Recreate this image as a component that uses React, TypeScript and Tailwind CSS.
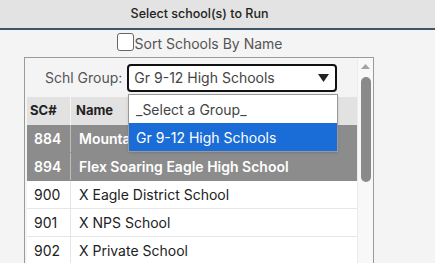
import { useState } from 'react';

type School = { sc: string; name: string; selected: boolean };

const schools: School[] = [
  { sc: '884', name: 'Mountain Vista High School', selected: true },
  { sc: '894', name: 'Flex Soaring Eagle High School', selected: true },
  { sc: '900', name: 'X Eagle District School', selected: false },
  { sc: '901', name: 'X NPS School', selected: false },
  { sc: '902', name: 'X Private School', selected: false },
];

const groups = ['_Select a Group_', 'Gr 9-12 High Schools'];

export default function App() {
  const [sortByName, setSortByName] = useState(false);
  const [group] = useState('Gr 9-12 High Schools');

  return (
    <div className="w-[435px] h-[263px] overflow-hidden bg-[#f4f4f4] font-['Inter',sans-serif] text-[#444]">
      {/* Title bar */}
      <div className="h-[30px] flex items-center justify-center pr-[36px] bg-[#e3e3e3] border-b-2 border-[#3c5569] text-[12.5px] font-medium text-[#222]">
        Select school(s) to Run
      </div>

      <label className="h-[27px] flex items-center justify-center gap-[1px] pr-[36px] text-[14px] text-[#555]">
        <input
          type="checkbox"
          checked={sortByName}
          onChange={e => setSortByName(e.target.checked)}
          className="appearance-none w-[17px] h-[18px] rounded-[3px] border border-[#666] bg-white mt-[-3px]"
        />
        Sort Schools By Name
      </label>

      <div className="relative ml-[24px] w-[350px] h-[220px] border-t border-l border-r border-[#9a9a9a] bg-[#f4f4f4] flex">
        <div className="flex-1 flex flex-col">
          {/* Group filter */}
          <div className="h-[39px] flex items-center pl-[20px] gap-[5px] text-[14px]">
            <span className="text-[#555]">Schl Group:</span>
            <div className="w-[210px] h-[28px] rounded-[4px] border-2 border-[#111] bg-white flex items-center justify-between pl-[5px] pr-[6px] text-[#444]">
              <span>{group}</span>
              <svg width="11" height="8" viewBox="0 0 11 8"><path d="M0 0H11L5.5 8Z" fill="#222" /></svg>
            </div>
          </div>

          {/* Table */}
          <div className="ml-[2px] w-[330px] bg-white text-[14px]">
            <div className="h-[28px] flex items-center bg-[#e2e2e2] font-bold text-[#222] text-[13px]">
              <div className="w-[44px] pl-[3px] h-full flex items-center border-r border-[#f5f5f5]">SC#</div>
              <div className="pl-[5px]">Name</div>
            </div>
            {schools.map(s => (
              <div
                key={s.sc}
                className={
                  s.selected
                    ? 'h-[28px] flex items-center bg-[#8c8c8c] text-white font-semibold border-b border-[#8c8c8c]'
                    : 'h-[28px] flex items-center bg-white text-[#222] border-b border-[#e6e6e6]'
                }
              >
                <div className={s.selected ? 'w-[44px] h-full pl-[7px] flex items-center border-r border-[#bdbdbd]' : 'w-[44px] h-full pl-[7px] flex items-center border-r border-[#e6e6e6]'}>
                  {s.sc}
                </div>
                <div className="pl-[8px] whitespace-nowrap">{s.name}</div>
              </div>
            ))}
          </div>
        </div>

        {/* Scrollbar */}
        <div className="w-[16px] bg-[#f8f8f8] border-l border-[#ececec] flex flex-col items-center pt-[6px]">
          <svg width="9" height="5" viewBox="0 0 9 5"><path d="M0 5H9L4.5 0Z" fill="#a3a3a3" /></svg>
          <div className="mt-[8px] w-[10px] h-[105px] rounded-full bg-[#8a8a8a]" />
        </div>

        {/* Open dropdown list */}
        <div className="absolute left-[103px] top-[36px] w-[210px] bg-white border border-[#999] shadow-sm text-[14px]">
          {groups.map(g => (
            <div
              key={g}
              className={g === group ? 'h-[28px] flex items-center pl-[7px] bg-[#1a6dd6] text-white' : 'h-[28px] flex items-center pl-[7px] text-[#444]'}
            >
              {g}
            </div>
          ))}
        </div>
      </div>
    </div>
  );
}
